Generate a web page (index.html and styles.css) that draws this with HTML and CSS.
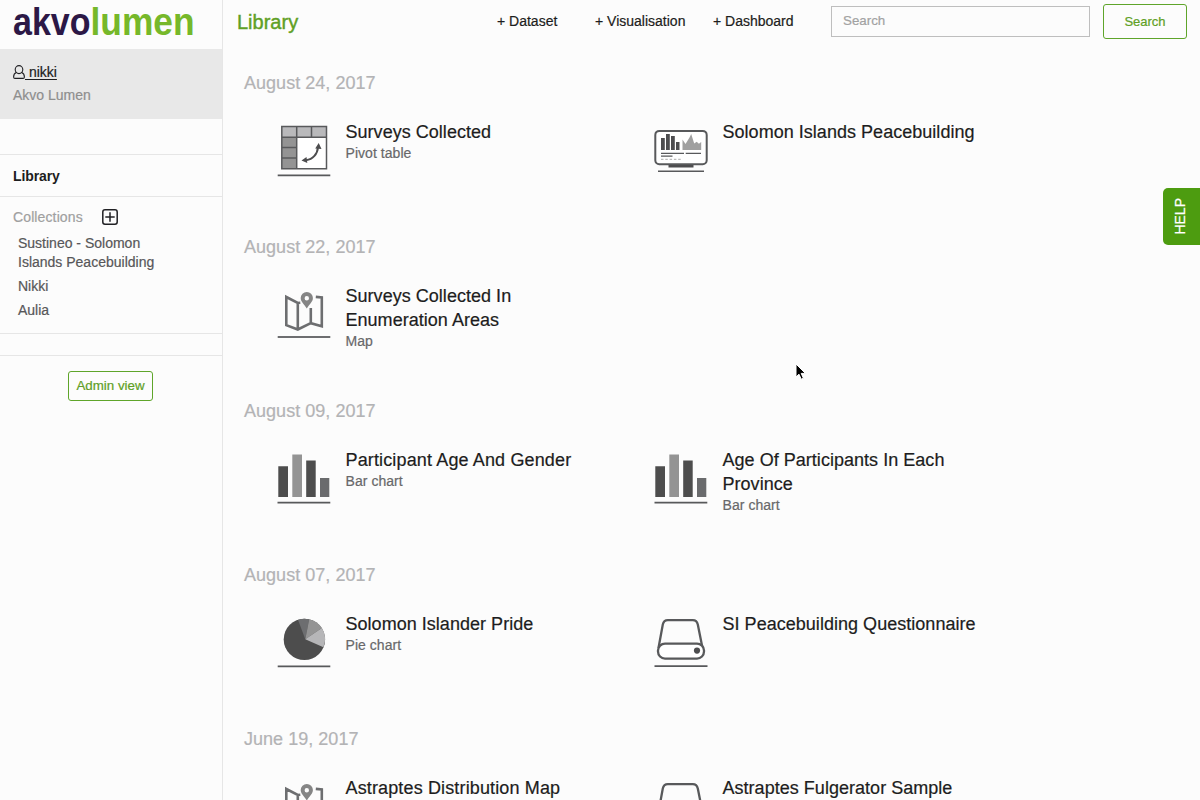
FILE: index.html
```html
<!DOCTYPE html>
<html lang="en">
<head>
<meta charset="utf-8">
<title>Akvo Lumen</title>
<link rel="stylesheet" href="styles.css">
</head>
<body>
<svg class="defs" aria-hidden="true">
  <symbol id="pivot" viewBox="0 0 70 70">
    <path fill="#fff" d="M11.500 11.500h45v42h-45z"/>
    <path fill="#b9b9bb" d="M12 12h44v10.500H12z"/>
    <path fill="#949494" d="M12 22.500h14.500V53H12z"/>
    <path fill="none" stroke="#58595b" stroke-width="1.500" d="M11.800 11.500h44.700v42.300H11.800zM11.800 22.300h44.700M26.700 11.500v42.300M41.500 11.500v10.800M11.800 32.500h14.900M11.800 43h14.900"/>
    <path fill="none" stroke="#4d4d4f" stroke-width="2" d="M48 32c-.5 7-5 12.500-12 13.200"/>
    <path fill="#4d4d4f" d="M48.700 28l2.800 6-6.300-.5zM31.500 45.600l5-3.500.8 6z"/>
    <path stroke="#58595b" stroke-width="1.700" d="M7.700 60.300h52.600"/>
  </symbol>
  <symbol id="dashboard" viewBox="0 0 70 70">
    <rect x="8.300" y="15.900" width="51.400" height="33.400" rx="4" fill="#fff" stroke="#58595b" stroke-width="2"/>
    <path fill="#4d4d4f" d="M14 23h3.800v12H14zM19 19h3.800v16H19zM24 21h3.800v14H24zM29 27h3.500v8H29z"/>
    <path fill="#a0a0a0" d="M35.500 35V24.500l3 4.500 4-6.500L44.200 19l3 9.500 2.500-1.800 2.200 2 2.300-1.700V35z"/>
    <path fill="none" stroke="#58595b" stroke-width="1.300" d="M14 38.300h23M38.700 38.300H54M14 41.200h11.500"/>
    <path fill="none" stroke="#aaa" stroke-width="1" stroke-dasharray="2.500 1.800" d="M14 44.300h20"/>
    <path fill="#4d4d4f" d="M21.500 50h25v2.500h-25z"/>
    <path stroke="#58595b" stroke-width="1.600" d="M11 56.200h46"/>
  </symbol>
  <symbol id="map" viewBox="0 -1 70 70">
    <path fill="none" stroke="#6d6e70" stroke-width="2.600" d="M30.300 22.800l-2.500.2-11.500-6v28.200l11.500 4.300 13-6.300 11 3.100V17.500l-6-.6M27.800 23v26.500M40.800 43.200V28"/>
    <path fill="#858585" fill-rule="evenodd" d="M36.800 12a6.100 6.100 0 0 0-6.100 6.100c0 3.900 3.400 6.100 6.100 10.400 2.700-4.300 6.100-6.500 6.100-10.400A6.100 6.100 0 0 0 36.800 12zm0 4a2.200 2.200 0 1 1 0 4.400 2.200 2.200 0 0 1 0-4.400z"/>
    <path stroke="#6d6e70" stroke-width="2" d="M7.700 57h52.600"/>
  </symbol>
  <symbol id="bar" viewBox="0 -2 70 70">
    <path fill="#4d4d4d" d="M8.300 21.300H18V52H8.300zM36.200 15.500h9.500V52h-9.500z"/>
    <path fill="#949494" d="M22.300 9.500H32V52h-9.700z"/>
    <path fill="#6a6b6d" d="M50 33h9.300v19H50z"/>
    <path stroke="#58595b" stroke-width="1.700" d="M7.500 57.600h52.800"/>
  </symbol>
  <symbol id="pie" viewBox="0 -1 70 70">
    <circle cx="34.400" cy="31.400" r="20.700" fill="#4d4d4d"/>
    <path fill="#6d6e70" d="M35.300 31.300L28 11.700q5.500-1.600 11.200-.4z"/>
    <path fill="#949494" d="M35.300 31.300l3.900-20q8 1.700 12.700 8.700z"/>
    <path fill="#b6b6b8" d="M35.300 31.300L51.900 20q5.600 9.500 1.500 19.300z"/>
    <path stroke="#58595b" stroke-width="1.700" d="M7.700 58.300h52.600"/>
  </symbol>
  <symbol id="disk" viewBox="0 -1 70 70">
    <path fill="none" stroke="#58595b" stroke-width="2.300" d="M11.500 40l4.300-23.500q1-4.300 5-4.300h25q4 0 5 4.300L55.500 40"/>
    <rect x="11" y="35.600" width="46" height="15" rx="7" fill="#fff" stroke="#58595b" stroke-width="2.300"/>
    <circle cx="50" cy="42.600" r="3.100" fill="#4d4d4f"/>
    <path stroke="#58595b" stroke-width="1.700" d="M7.500 58.200h53"/>
  </symbol>
</svg>

<div class="app">
  <aside class="sidebar">
    <div class="brand">
      <svg class="logo" viewBox="0 0 200 49">
        <text class="logo-akvo" x="13" y="34.700" textLength="77.500" lengthAdjust="spacingAndGlyphs">akvo</text>
        <text class="logo-lumen" x="90.500" y="34.700" textLength="104" lengthAdjust="spacingAndGlyphs">lumen</text>
      </svg>
    </div>
    <div class="account">
      <a class="user"><svg class="user-icon" viewBox="0 0 12 14"><ellipse cx="6" cy="4.600" rx="3.800" ry="4"/><path d="M3.300 7.500C1.200 8.300.6 10 .6 12q0 1.400 1.400 1.400h8q1.400 0 1.400-1.400c0-2-.6-3.700-2.700-4.500"/></svg><span class="username">&nbsp;nikki</span></a>
      <div class="org">Akvo Lumen</div>
    </div>
    <div class="spacer"></div>
    <a class="nav-library">Library</a>
    <section class="collections">
      <div class="collections-head">
        <span class="collections-title">Collections</span>
        <svg class="add" viewBox="0 0 16 16"><rect x=".8" y=".8" width="14.400" height="14.400" rx="2.200"/><path d="M8 3.300v9.400M3.300 8h9.400"/></svg>
      </div>
      <ul class="collection-list">
        <li>Sustineo - Solomon<br>Islands Peacebuilding</li>
        <li>Nikki</li>
        <li>Aulia</li>
      </ul>
    </section>
    <div class="divider"></div>
    <div class="admin"><button class="btn admin-btn">Admin view</button></div>
  </aside>

  <main class="main">
    <header class="topbar">
      <h1 class="heading">Library</h1>
      <nav class="actions"><a class="a1">+ Dataset</a><a class="a2">+ Visualisation</a><a class="a3">+ Dashboard</a></nav>
      <input class="search" type="text" placeholder="Search">
      <button class="btn search-btn">Search</button>
    </header>

    <div class="listing">
      <section class="group">
        <h2 class="date">August 24, 2017</h2>
        <div class="items">
          <article class="item"><svg class="icon"><use href="#pivot"/></svg><div class="info"><h3 class="title">Surveys Collected</h3><p class="kind">Pivot table</p></div></article>
          <article class="item"><svg class="icon"><use href="#dashboard"/></svg><div class="info"><h3 class="title">Solomon Islands Peacebuilding</h3></div></article>
        </div>
      </section>
      <section class="group">
        <h2 class="date">August 22, 2017</h2>
        <div class="items">
          <article class="item"><svg class="icon"><use href="#map"/></svg><div class="info"><h3 class="title">Surveys Collected In Enumeration Areas</h3><p class="kind">Map</p></div></article>
        </div>
      </section>
      <section class="group">
        <h2 class="date">August 09, 2017</h2>
        <div class="items">
          <article class="item"><svg class="icon"><use href="#bar"/></svg><div class="info"><h3 class="title wide">Participant Age And Gender</h3><p class="kind">Bar chart</p></div></article>
          <article class="item"><svg class="icon"><use href="#bar"/></svg><div class="info"><h3 class="title">Age Of Participants In Each Province</h3><p class="kind">Bar chart</p></div></article>
        </div>
      </section>
      <section class="group">
        <h2 class="date">August 07, 2017</h2>
        <div class="items">
          <article class="item"><svg class="icon"><use href="#pie"/></svg><div class="info"><h3 class="title">Solomon Islander Pride</h3><p class="kind">Pie chart</p></div></article>
          <article class="item"><svg class="icon"><use href="#disk"/></svg><div class="info"><h3 class="title">SI Peacebuilding Questionnaire</h3></div></article>
        </div>
      </section>
      <section class="group">
        <h2 class="date">June 19, 2017</h2>
        <div class="items">
          <article class="item"><svg class="icon"><use href="#map"/></svg><div class="info"><h3 class="title wide">Astraptes Distribution Map</h3></div></article>
          <article class="item"><svg class="icon"><use href="#disk"/></svg><div class="info"><h3 class="title">Astraptes Fulgerator Sample</h3></div></article>
        </div>
      </section>
    </div>
  </main>
</div>
<div class="help"><span class="help-text">HELP</span></div>
<svg class="cursor" viewBox="0 0 12 18"><path d="M1 1v13l3-2.800 2.200 5 2.200-1-2.200-4.800h4.200z" fill="#000" stroke="#fff" stroke-width="1"/></svg>
</body>
</html>
```

FILE: styles.css
```css
* { box-sizing: border-box; }
body {
  margin: 0;
  height: 800px;
  overflow: hidden;
  background: #fcfcfc;
  color: #1d1d20;
  font-family: "Liberation Sans", Arial, sans-serif;
  font-size: 14px;
  -webkit-text-stroke: .2px;
}
h1, h2, h3, p, ul { margin: 0; padding: 0; font-weight: normal; }
ul { list-style: none; }
.defs { display: none; }
.app { display: flex; height: 800px; }

.sidebar { width: 223px; flex: none; border-right: 1px solid #e6e6e6; }
.brand { height: 49px; }
.logo { display: block; width: 200px; height: 49px; }
.logo text { font-size: 38px; font-weight: bold; -webkit-text-stroke: 0; }
.logo-akvo { fill: #2c1846; }
.logo-lumen { fill: #76b82a; }
.account { height: 70px; padding: 13px 13px 0; background: #e8e8e8; }
.user { display: flex; align-items: center; width: 45px; height: 20px; line-height: 20px; white-space: nowrap; }
.user-icon { flex: none; width: 12px; height: 14px; fill: none; stroke: #202024; stroke-width: 1.100; }
.username { text-decoration: underline; text-underline-offset: 2px; }
.org { margin-top: 4px; line-height: 18px; color: #8e8e8e; }
.spacer { height: 36px; border-bottom: 1px solid #e6e6e6; }
.nav-library { display: block; height: 42px; padding-left: 13px; line-height: 42px; font-weight: bold; border-bottom: 1px solid #e6e6e6; -webkit-text-stroke: 0; letter-spacing: -.1px; }
.collections { height: 137px; padding: 10px 13px 0; border-bottom: 1px solid #e6e6e6; }
.collections-head { display: flex; align-items: center; gap: 19px; height: 20px; color: #a0a0a0; }
.collections-title { letter-spacing: .12px; }
.add { width: 16px; height: 16px; fill: none; stroke: #202024; stroke-width: 1.500; }
.collection-list { padding: 7px 0 0 5px; line-height: 19px; color: #575759; }
.collection-list li { margin-bottom: 5px; white-space: nowrap; }
.divider { height: 22px; border-bottom: 1px solid #e6e6e6; }
.admin { display: flex; justify-content: center; padding: 15px 1px 0 0; }
.btn { padding: 0; border: 1px solid #5fa52a; border-radius: 3px; background: transparent; color: #5fa025; font: 13.330px "Liberation Sans", Arial, sans-serif; -webkit-text-stroke: .2px; }
.admin-btn { width: 85px; height: 30px; padding-bottom: 2px; }

.main { flex: 1; min-width: 0; }
.topbar { display: flex; align-items: flex-start; height: 65px; padding: 4px 13px 0 14px; }
.heading { width: 260px; font-size: 20px; line-height: 36px; color: #5fa025; -webkit-text-stroke: .4px; }
.actions { display: flex; width: 334px; line-height: 34px; white-space: nowrap; }
.a1 { width: 98px; }
.a2 { width: 118px; }
.search { width: 259px; height: 31px; margin-top: 2px; padding: 0 11px 2px; border: 1px solid #bebebe; background: #fcfcfc; font: 13.330px "Liberation Sans", Arial, sans-serif; }
.search::placeholder { color: #a2a2a2; }
.search-btn { width: 84px; height: 35px; margin-left: 13px; font-size: 13px; }

.listing { height: 735px; overflow: hidden; }
.group { height: 164px; padding: 6px 0 0 21px; }
.date { height: 44px; font-size: 18px; line-height: 24px; color: #b3b3b5; letter-spacing: .03px; }
.items { display: flex; padding-left: 26px; }
.item { display: flex; width: 377px; }
.icon { flex: none; width: 70px; height: 70px; }
.info { width: 270px; padding: 5px 0 0 5.500px; }
.title { font-size: 18px; line-height: 24px; letter-spacing: .03px; }
.title.wide { letter-spacing: .14px; }
.kind { line-height: 18px; color: #68686a; letter-spacing: .05px; }

.help { position: absolute; left: 1163px; top: 188px; display: flex; align-items: center; justify-content: center; width: 37px; height: 57px; padding-right: 4px; border-radius: 5px 0 0 5px; background: #4d9c10; color: #fff; }
.help-text { writing-mode: vertical-rl; transform: rotate(180deg); }
.cursor { position: absolute; left: 795px; top: 363px; width: 12px; height: 18px; }
```
